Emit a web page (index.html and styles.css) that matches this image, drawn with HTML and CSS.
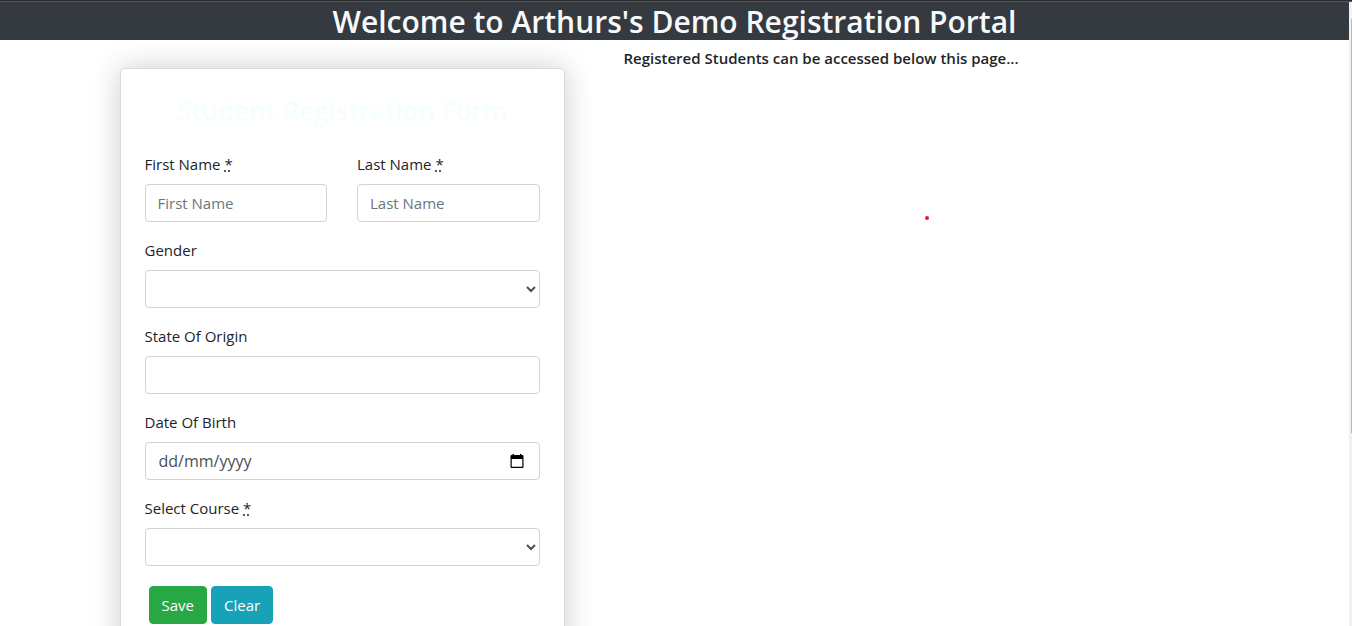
FILE: index.html
```html
<!DOCTYPE html>
<html lang="en-GB">
<head>
<meta charset="utf-8">
<title>Registration Portal</title>
<link rel="stylesheet" href="styles.css">
</head>
<body>
<header class="banner"><h1 class="banner-title">Welcome to Arthurs's Demo Registration Portal</h1></header>
<main class="layout">
  <section class="form-column">
    <form class="card">
      <h2 class="card-title">Student Registration Form</h2>
      <div class="row">
        <div class="group">
          <label for="first">First Name <abbr title="required">*</abbr></label>
          <input class="control" id="first" type="text" placeholder="First Name">
        </div>
        <div class="group">
          <label for="last">Last Name <abbr title="required">*</abbr></label>
          <input class="control" id="last" type="text" placeholder="Last Name">
        </div>
      </div>
      <div class="group">
        <label for="gender">Gender</label>
        <select class="control select" id="gender"><option></option><option>Male</option><option>Female</option></select>
      </div>
      <div class="group">
        <label for="state">State Of Origin</label>
        <input class="control" id="state" type="text">
      </div>
      <div class="group">
        <label for="dob">Date Of Birth</label>
        <div class="control date">
          <input class="date-input" id="dob" type="text" inputmode="numeric" placeholder="dd/mm/yyyy">
          <button class="date-button" type="button" aria-label="Open calendar">
            <svg width="14" height="15" viewBox="0 0 14 15" aria-hidden="true"><path fill="#000" fill-rule="evenodd" d="M2.500 0h1.500v1h6V0h1.500v1H12.500q1 0 1 1v11q0 1-1 1H1.500q-1 0-1-1V2q0-1 1-1h1zM1.700 5v7.800h10.600V5z"/></svg>
          </button>
        </div>
      </div>
      <div class="group">
        <label for="course">Select Course <abbr title="required">*</abbr></label>
        <select class="control select" id="course"><option></option></select>
      </div>
      <div class="actions">
        <button class="btn save" type="submit">Save</button>
        <button class="btn clear" type="reset">Clear</button>
      </div>
    </form>
  </section>
  <section class="info-column">
    <h6 class="notice">Registered Students can be accessed below this page...</h6>
    <span class="dot"></span>
  </section>
</main>
<div class="scroll-track"><div class="scroll-thumb"></div></div>
</body>
</html>
```
FILE: styles.css
```css
*, *::before, *::after { box-sizing: border-box; }
body {
  margin: 0;
  height: 100vh;
  overflow: hidden;
  padding-right: 3px;
  background: #fff;
  color: #212529;
  font: 400 15px/24px "Segoe UI", "Open Sans", sans-serif;
}
h1, h2, h6 { margin: 0; }
.banner {
  margin-right: -3px;
  padding-right: 3px;
  border-top: 1px solid #29292c;
  background: #343a40;
  box-shadow: inset 0 1px #54545a;
}
.banner-title {
  padding-top: 3px;
  color: #f8f9fa;
  font-size: 30px;
  font-weight: 600;
  line-height: 36px;
  text-align: center;
}
.layout { display: flex; max-width: 1140px; margin: 0 auto; }
.form-column { flex: 0 0 475px; padding: 28px 15px 0; }
.card {
  padding: 24px;
  border: 1px solid #dadada;
  border-radius: 4px;
  background: #fff;
  box-shadow: 0 0 30px rgba(0, 0, 0, .2);
}
.card-title {
  margin-bottom: 24px;
  color: #f5fffa;
  font-size: 26px;
  font-weight: 600;
  line-height: 35px;
  text-align: center;
}
.row { display: flex; gap: 30px; }
.row .group { flex: 1 1 0; min-width: 0; }
.group { margin-bottom: 16px; }
label { display: block; margin-bottom: 8px; }
abbr { text-decoration: underline dotted; }
.control {
  display: block;
  width: 100%;
  height: 38px;
  padding: 6px 12px;
  border: 1px solid #ced4da;
  border-radius: 4px;
  background: #fff;
  color: #495057;
  font: inherit;
}
.select { padding: 6px 1px; }
.control::placeholder { color: #6c757d; opacity: 1; }
.date { display: flex; align-items: center; padding: 6px 15px 6px 13px; }
.date-input { flex: 1; min-width: 0; padding: 0; border: 0; background: none; color: #495057; font: inherit; font-size: 16px; }
.date-input::placeholder { color: #495057; opacity: 1; }
.date-button { display: flex; padding: 0; border: 0; background: none; }
.actions { display: flex; gap: 4px; padding: 4px; }
.btn {
  height: 38px;
  padding: 6px 12px;
  border: 1px solid transparent;
  border-radius: 4px;
  color: #fff;
  font: inherit;
}
.save { background: #28a745; border-color: #28a745; }
.clear { background: #17a2b8; border-color: #17a2b8; }
.info-column { flex: 1; display: flex; flex-direction: column; margin-right: -15px; padding: 8px 0 0 15px; }
.notice { padding-left: 29px; font-size: 15px; font-weight: 600; line-height: 20px; }
.dot { align-self: center; width: 4px; height: 4px; margin-top: 148px; border-radius: 50%; background: #ed1c24; }
.scroll-track { position: absolute; top: 2px; right: 0; bottom: 0; width: 3px; background: #f1f1f1; }
.scroll-thumb { width: 1px; height: 414px; margin: 17px 0 0 2px; background: #b8b8b8; }
```
